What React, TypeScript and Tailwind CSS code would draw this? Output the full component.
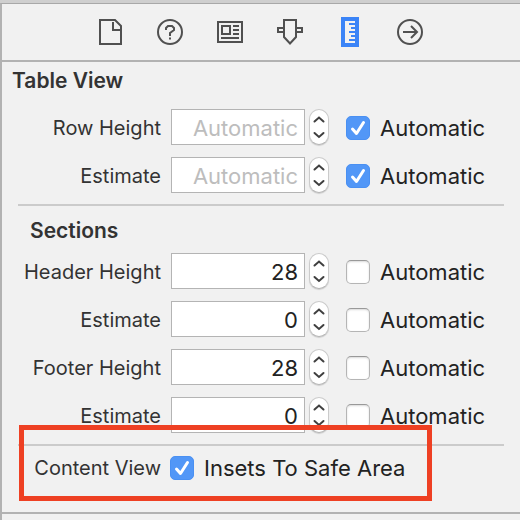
import { useState, type ReactNode } from 'react';

type SizeField = {
  id: string;
  label: string;
  value: number;
  automatic: boolean;
};

const tableFields: SizeField[] = [
  { id: 'row-height', label: 'Row Height', value: 44, automatic: true },
  { id: 'row-estimate', label: 'Estimate', value: 44, automatic: true },
];

const sectionFields: SizeField[] = [
  { id: 'header-height', label: 'Header Height', value: 28, automatic: false },
  { id: 'header-estimate', label: 'Estimate', value: 0, automatic: false },
  { id: 'footer-height', label: 'Footer Height', value: 28, automatic: false },
  { id: 'footer-estimate', label: 'Estimate', value: 0, automatic: false },
];

const tabs: { name: string; icon: ReactNode }[] = [
  {
    name: 'File',
    icon: (
      <>
        <path d="M5 3h15l6 6v18H5z" />
        <path d="M18 5v8h7" />
      </>
    ),
  },
  {
    name: 'Quick Help',
    icon: (
      <>
        <circle cx="15" cy="15" r="12" />
        <path d="M11 13v-2l2-2h4l2 2v2l-4 3v3" />
        <path d="M15 20.500v2" />
      </>
    ),
  },
  {
    name: 'Identity',
    icon: (
      <>
        <path d="M3 5h24v20H3z" />
        <path d="M7 9h8v8H7zM18 9h6M18 13h6M18 17h6M6 21h18" />
      </>
    ),
  },
  {
    name: 'Attributes',
    icon: (
      <>
        <path d="M9 3h12v17l-6 6.500L9 20z" />
        <path d="M9 11H3v4h6M21 11h6v4h-6" />
      </>
    ),
  },
  {
    name: 'Size',
    icon: (
      <>
        <path d="M6 0h18v30H6z" fill="currentColor" stroke="none" />
        <path
          d="M10 4h10v2h-6v2h6v2h-4v2h4v2h-6v2h6v2h-4v2h4v2h-6v2h6v2H10z"
          fill="#f1f1f1"
          stroke="none"
        />
      </>
    ),
  },
  {
    name: 'Connections',
    icon: (
      <>
        <circle cx="15" cy="15" r="12" />
        <path d="M8 15h14M16 9l6 6-6 6" />
      </>
    ),
  },
];

function Checkbox({ label, checked, onChange }: { label: string; checked: boolean; onChange: (v: boolean) => void }) {
  return (
    <label className="flex items-center gap-[10px] text-[22px] leading-8 whitespace-nowrap text-[#222]">
      <span className="relative size-6 shrink-0">
        <input
          type="checkbox"
          checked={checked}
          onChange={(e) => onChange(e.target.checked)}
          className="peer block size-6 appearance-none rounded-[5px] border border-[#b5b5b5] border-t-[#999] bg-white shadow-[inset_0_1px_2px_rgba(0,0,0,0.15)] checked:border-[#4a90f2] checked:bg-[#5297f7] checked:shadow-none"
        />
        <svg
          viewBox="0 0 24 24"
          className="pointer-events-none absolute inset-0 hidden size-6 fill-none stroke-white stroke-[3] peer-checked:block"
          strokeLinecap="round"
          strokeLinejoin="round"
        >
          <path d="M6.500 13l4 4.500L17.500 6.500" />
        </svg>
      </span>
      {label}
    </label>
  );
}

function Stepper({ name, onStep }: { name: string; onStep: (by: number) => void }) {
  return (
    <div className="ml-1 flex h-9 w-5 shrink-0 flex-col overflow-hidden rounded-full border border-[#cbcbcb] border-b-[#b4b4b4] bg-white text-[#404040] shadow-[0_1px_1px_rgba(0,0,0,0.15)]">
      <button type="button" aria-label={`Increase ${name}`} onClick={() => onStep(1)} className="flex-1">
        <svg viewBox="0 0 18 17" className="w-full fill-none stroke-current stroke-2" strokeLinecap="round">
          <path d="M4.500 11.500L9 7.500l4.500 4" />
        </svg>
      </button>
      <button type="button" aria-label={`Decrease ${name}`} onClick={() => onStep(-1)} className="flex-1">
        <svg viewBox="0 0 18 17" className="w-full fill-none stroke-current stroke-2" strokeLinecap="round">
          <path d="M4.500 6L9 10l4.500-4" />
        </svg>
      </button>
    </div>
  );
}

function SizeRow({ field }: { field: SizeField }) {
  const [value, setValue] = useState(field.value);
  const [automatic, setAutomatic] = useState(field.automatic);

  return (
    <div className="flex items-center">
      <label htmlFor={field.id} className="w-[159px] shrink-0 pt-0.5 text-right text-xl whitespace-nowrap">
        {field.label}
      </label>
      <input
        id={field.id}
        type="text"
        inputMode="numeric"
        placeholder="Automatic"
        value={automatic ? '' : value}
        onChange={(e) => setValue(Number(e.target.value) || 0)}
        className="ml-[10px] h-9 w-[134px] border border-[#b4b4b4] bg-white px-[6px] pt-0.5 text-right text-[22px] text-[#222] placeholder:text-[#bdbdbd]"
      />
      <Stepper name={field.label} onStep={(by) => setValue(value + by)} />
      <div className="ml-[17px] pt-0.5">
        <Checkbox label="Automatic" checked={automatic} onChange={setAutomatic} />
      </div>
    </div>
  );
}

export default function App() {
  const [insets, setInsets] = useState(true);

  return (
    <div className="flex min-h-screen flex-col border-t-[3px] border-[#cfcfcf] bg-[#f1f1f1] font-['Inter',sans-serif] text-[#333]">
      <div className="flex-1 border-t border-l-2 border-t-[#a8a8a8] border-l-[#b2b2b2]">
        <nav className="flex h-[58px] items-center justify-center gap-[30px] border-b-2 border-[#b2b2b2] pr-0.5">
          {tabs.map((tab) => (
            <button
              key={tab.name}
              type="button"
              aria-label={tab.name}
              className={tab.name === 'Size' ? 'text-[#3b84f7]' : 'text-[#505050]'}
            >
              <svg viewBox="0 0 30 30" className="size-[30px] fill-none stroke-current stroke-2">
                {tab.icon}
              </svg>
            </button>
          ))}
        </nav>

        <section>
          <h2 className="mb-[9px] pl-[10px] text-[21px] leading-[38px] font-semibold">Table View</h2>
          <div className="space-y-3">
            {tableFields.map((field) => (
              <SizeRow key={field.id} field={field} />
            ))}
          </div>
        </section>

        <hr className="mx-4 mt-[11px] border-t-2 border-[#cbcbcb]" />

        <section className="pt-[6px]">
          <h3 className="mb-[3px] pl-7 text-[21px] leading-[38px] font-semibold">Sections</h3>
          <div className="space-y-3">
            {sectionFields.map((field) => (
              <SizeRow key={field.id} field={field} />
            ))}
          </div>
        </section>

        <hr className="mx-4 mt-[11px] border-t-2 border-[#cbcbcb]" />

        <section className="border-b-2 border-[#b2b2b2] pt-[6px] pb-7">
          <div className="relative flex items-center gap-[9px]">
            <span className="w-[159px] shrink-0 text-right text-xl whitespace-nowrap">Content View</span>
            <Checkbox label="Insets To Safe Area" checked={insets} onChange={setInsets} />
            {/* highlight */}
            <div className="pointer-events-none absolute -top-[27px] -bottom-[17px] left-[17px] w-[413px] border-5 border-[#ee4023]" />
          </div>
        </section>
      </div>
    </div>
  );
}
